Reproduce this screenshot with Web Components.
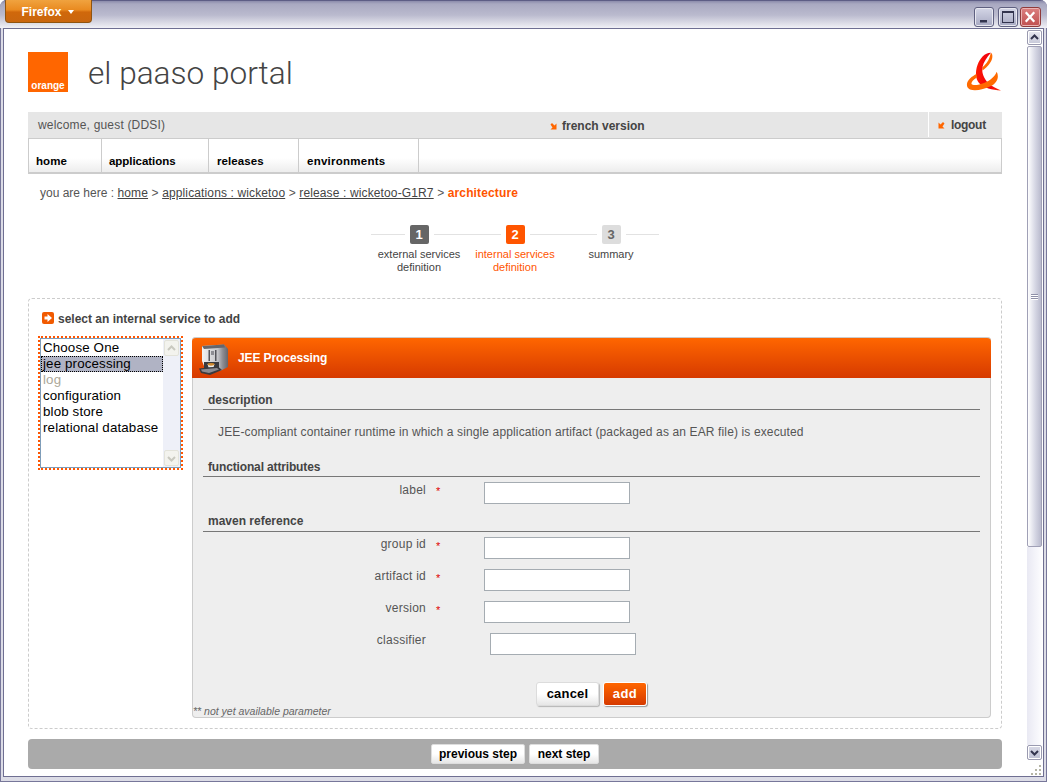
<!DOCTYPE html>
<html>
<head>
<meta charset="utf-8">
<title>el paaso portal</title>
<style>
  html, body { margin: 0; padding: 0; background: #fff; }
  body { font-family: "Liberation Sans", Arial, sans-serif; font-size: 12px; color: #444; overflow: hidden; }
</style>
</head>
<body>
<window-frame>
  <portal-header></portal-header>
  <user-bar></user-bar>
  <main-nav></main-nav>
  <bread-crumb></bread-crumb>
  <wizard-steps></wizard-steps>
  <service-box>
    <service-list slot="list">
      <service-option>Choose One</service-option>
      <service-option selected>jee processing</service-option>
      <service-option disabled>log</service-option>
      <service-option>configuration</service-option>
      <service-option>blob store</service-option>
      <service-option>relational database</service-option>
    </service-list>
    <service-form slot="form"></service-form>
  </service-box>
  <wizard-footer></wizard-footer>
</window-frame>

<script>
class WindowFrame extends HTMLElement {
  constructor() {
    super();
    this.attachShadow({ mode: "open" });
  }

  connectedCallback() {
    this.shadowRoot.innerHTML = `
      <style>
      :host {
        display: flex;
        flex-direction: column;
        width: 1047px;
        height: 782px;
        box-sizing: border-box;
        padding: 0 3px 5px 3px;
        background: #dcdce6;
        border-radius: 7px 7px 0 0;
        box-shadow: inset 0 -1px 0 #77779a, inset 1px 0 0 #77779a, inset -1px 0 0 #77779a;
        overflow: hidden;
      }
      .title {
        flex: none;
        height: 28px;
        margin: 0 -3px;
        padding: 0 6px 0 5px;
        display: flex;
        justify-content: space-between;
        align-items: flex-start;
        background: linear-gradient(#8b8bab 0, #a9a9c1 3px, #babace 14px, #e4e4ec 24px, #f6f6fa 28px);
        border-top: 1px solid #5d5d85;
        box-sizing: border-box;
      }
      .firefox {
        width: 87px;
        height: 23px;
        margin-top: -1px;
        box-sizing: border-box;
        display: flex;
        align-items: center;
        justify-content: center;
        gap: 6px;
        padding: 1px 2px 0 0;
        color: #fff;
        font: bold 12px "Liberation Sans", Arial, sans-serif;
        background: linear-gradient(#f0a33f, #e98a20 45%, #d0680b 55%, #c9660f);
        border: 1px solid #8f5410;
        border-top: 0;
        border-radius: 0 0 4px 4px;
      }
      .firefox i {
        border-left: 3.5px solid transparent;
        border-right: 3.5px solid transparent;
        border-top: 4px solid #fff;
      }
      .controls { display: flex; margin-top: 6px; }
      .btn {
        width: 20px;
        height: 20px;
        box-sizing: border-box;
        border: 1px solid #5f6080;
        border-radius: 3px;
        background: linear-gradient(#d4d6e6, #a7a9c2);
        box-shadow: inset 0 0 0 1px #e8e8f0;
      }
      .btn svg { display: block; width: 18px; height: 18px; }
      .btn.max { margin-left: 4px; }
      .btn.close {
        width: 21px;
        margin-left: 2px;
        border-color: #8f3b3b;
        background: linear-gradient(#dc8080, #c04f4f);
        box-shadow: inset 0 0 0 1px #eab2b2;
      }
      .inner {
        flex: 1;
        min-height: 0;
        display: flex;
        background: #fff;
        border: 1px solid #6f6f92;
      }
      .page {
        width: 1023px;
        flex: none;
        box-sizing: border-box;
        padding: 0 25px 0 24px;
        display: flex;
        flex-direction: column;
        overflow: hidden;
      }
      .bar {
        width: 16px;
        flex: none;
        display: flex;
        flex-direction: column;
        align-items: stretch;
      }
      .arrow {
        width: 15px;
        height: 15px;
        box-sizing: border-box;
        border: 1px solid #9a9ab0;
        border-radius: 2px;
        background: linear-gradient(#e9e9f1, #c6c8d8);
        box-shadow: inset 0 0 0 1px #fff;
        flex: none;
      }
      .arrow svg { display: block; }
      .up { margin-top: 1px; }
      .thumb {
        width: 15px;
        height: 501px;
        margin-top: 1px;
        box-sizing: border-box;
        border: 1px solid #a0a0b6;
        background: linear-gradient(90deg, #fff, #d6d7e4 55%, #b9bacd);
        border-radius: 2px;
        flex: none;
        display: flex;
        align-items: center;
        justify-content: center;
      }
      .grip { width: 7px; height: 6px; background: repeating-linear-gradient(#8f90a8 0 1px, #fff 1px 2px); }
      .track { flex: 1; width: 15px; background: linear-gradient(90deg, #e9e9f3, #fdfdff); }
      .resize { height: 16px; flex: none; position: relative; }
      .resize svg { display: block; margin: 5px 0 0 4px; }
      </style>
      <div class="title">
        <div class="firefox">Firefox<i></i></div>
        <div class="controls">
          <div class="btn"><svg viewBox="0 0 18 18"><rect x="5" y="12" width="7" height="2.5" fill="#33344e"/></svg></div>
          <div class="btn max"><svg viewBox="0 0 18 18"><rect x="3.5" y="3.5" width="11" height="11" fill="none" stroke="#33344e"/><rect x="3" y="3" width="12" height="2" fill="#33344e"/></svg></div>
          <div class="btn close"><svg viewBox="0 0 19 18"><path d="M5 4l9 10M14 4L5 14" stroke="#fff" stroke-width="2.4" fill="none"/></svg></div>
        </div>
      </div>
      <div class="inner">
        <div class="page"><slot></slot></div>
        <div class="bar">
          <div class="arrow up"><svg width="13" height="13" viewBox="0 0 13 13"><path d="M3 8l3.5-3.5L10 8" fill="none" stroke="#33344e" stroke-width="2"/></svg></div>
          <div class="thumb"><div class="grip"></div></div>
          <div class="track"></div>
          <div class="arrow" style="background:linear-gradient(#d8d9e6,#bfc1d4)"><svg width="13" height="13" viewBox="0 0 13 13"><path d="M3 5l3.5 3.5L10 5" fill="none" stroke="#33344e" stroke-width="2"/></svg></div>
          <div class="resize"><svg width="11" height="11" viewBox="0 0 11 11" fill="#b5b5a5"><rect x="8" y="0" width="2" height="2"/><rect x="4" y="4" width="2" height="2"/><rect x="8" y="4" width="2" height="2"/><rect x="0" y="8" width="2" height="2"/><rect x="4" y="8" width="2" height="2"/><rect x="8" y="8" width="2" height="2"/></svg></div>
        </div>
      </div>
    `;
  }
}

class PortalHeader extends HTMLElement {
  constructor() {
    super();
    this.attachShadow({ mode: "open" });
  }

  connectedCallback() {
    this.shadowRoot.innerHTML = `
      <style>
      :host {
        display: flex;
        align-items: center;
        height: 40px;
        padding: 23px 0 20px 0;
      }
      .logo {
        width: 40px;
        height: 40px;
        background: #ff6600;
        display: flex;
        align-items: flex-end;
        justify-content: center;
        color: #fff;
        font: bold 10px/13px "Liberation Sans", Arial, sans-serif;
      }
      h1 {
        margin: 3px 0 0 20px;
        flex: 1;
        font: 300 31.600px/40px Roboto, "Liberation Sans", sans-serif;
        color: #444;
      }
      svg { display: block; }
      </style>
      <div class="logo">orange</div>
      <h1>el paaso portal</h1>
      <svg width="36" height="40" viewBox="0 0 36 40">
        <defs>
          <linearGradient id="red" x1="0" y1="0" x2="1" y2="0">
            <stop offset="0" stop-color="#ff1a00"/>
            <stop offset=".5" stop-color="#f0000f"/>
            <stop offset="1" stop-color="#ff2a00"/>
          </linearGradient>
        </defs>
        <path fill="#ff6a00" d="M25 .7C27 2 27 7 24 11C22 14 19 16.500 16.500 18.500L16.200 15.500C19 13 22.500 9 23.500 5.500C24 3.500 24.500 2 25 .7Z"/>
        <path fill="url(#red)" d="M25 .7C19 .5 14 6 11.500 13C9 20 9.500 27 13 31C18 36 26 38 35 38.500C30 36 25 34 22 31C17.500 26 15.500 20 16.500 15C17.500 10 21 5 25 .7Z"/>
        <path fill="#ff6a00" d="M30.700 19.700C33.500 25 31 31 25 34C18 37.500 9 39.500 4 37.500C-.5 35 .3 30 4 26.500C6 24.500 8.500 23 10.500 22L10.800 25.500C7.500 27.500 5 30 5.500 32C7 34 13 33 18 31C24 28.500 29 24.500 30.700 19.700Z"/>
      </svg>
    `;
  }
}

class UserBar extends HTMLElement {
  constructor() {
    super();
    this.attachShadow({ mode: "open" });
  }

  connectedCallback() {
    this.shadowRoot.innerHTML = `
      <style>
      :host {
        display: flex;
        align-items: stretch;
        height: 26px;
        background: #e6e6e6;
        color: #555;
        font: 12px/25px "Liberation Sans", Arial, sans-serif;
      }
      .welcome { width: 510px; padding-left: 10px; box-sizing: border-box; line-height: 27px; letter-spacing: .18px; }
      .lang {
        width: 390px;
        font-weight: bold;
        color: #444;
        display: flex;
        align-items: center;
        gap: 5px;
        padding: 3px 0 0 12px;
        box-sizing: border-box;
      }
      .logout {
        flex: 1;
        border-left: 1px solid #fff;
        font-weight: bold;
        color: #444;
        display: flex;
        align-items: center;
        gap: 6px;
        padding: 1px 0 0 9px;
        height: 24px;
        letter-spacing: -.3px;
      }
      svg { display: block; flex: none; }
      </style>
      <div class="welcome">welcome, guest (DDSI)</div>
      <div class="lang">
        <svg width="7" height="7" viewBox="0 0 7 7"><path d="M.5 1.500L2 0 4.500 2.500 6.500 .5V6.500H.5L2.500 4.500Z" fill="#ff6600"/></svg>
        french version
      </div>
      <div class="logout">
        <svg width="7" height="7" viewBox="0 0 7 7"><path d="M6.500 1.500L5 0 2.500 2.500 .5 .5V6.500H6.500L4.500 4.500Z" fill="#ff6600"/></svg>
        logout
      </div>
    `;
  }
}

class MainNav extends HTMLElement {
  constructor() {
    super();
    this.attachShadow({ mode: "open" });
  }

  connectedCallback() {
    this.shadowRoot.innerHTML = `
      <style>
      :host {
        display: flex;
        height: 36px;
        box-sizing: border-box;
        border: 1px solid #ccc;
        border-bottom-width: 2px;
        background: linear-gradient(#fff 19px, #ededed);
        color: #000;
        font: bold 11.500px/14px "Liberation Sans", Arial, sans-serif;
        letter-spacing: .1px;
      }
      a {
        box-sizing: border-box;
        padding: 15px 0 0 8px;
        border-right: 1px solid #ccc;
        color: inherit;
        text-decoration: none;
      }
      </style>
      <a style="width:73px;padding-left:7px">home</a>
      <a style="width:107px;padding-left:7px;letter-spacing:-.05px">applications</a>
      <a style="width:90px">releases</a>
      <a style="width:120px;letter-spacing:.25px">environments</a>
    `;
  }
}

class BreadCrumb extends HTMLElement {
  constructor() {
    super();
    this.attachShadow({ mode: "open" });
  }

  connectedCallback() {
    this.shadowRoot.innerHTML = `
      <style>
      :host {
        display: block;
        height: 51px;
        box-sizing: border-box;
        padding: 12px 0 0 12px;
        color: #555;
        font: 12px/15px "Liberation Sans", Arial, sans-serif;
        letter-spacing: .13px;
      }
      span { letter-spacing: 0; }
      a { color: #444; text-decoration: underline; }
      b { color: #ff5500; }
      </style>
      <span>you are here :</span> <a>home</a> &gt; <a>applications : wicketoo</a> &gt; <a>release : wicketoo-G1R7</a> &gt; <b>architecture</b>
    `;
  }
}

class WizardSteps extends HTMLElement {
  constructor() {
    super();
    this.attachShadow({ mode: "open" });
  }

  connectedCallback() {
    this.shadowRoot.innerHTML = `
      <style>
      :host {
        display: flex;
        justify-content: center;
        height: 73px;
        font: 11px/13px "Liberation Sans", Arial, sans-serif;
        color: #444;
      }
      .step { width: 96px; display: flex; flex-direction: column; align-items: center; }
      .head { align-self: stretch; display: flex; align-items: center; gap: 5px; height: 19px; margin-bottom: 4px; }
      .line { flex: 1; height: 1px; background: #e2e2e2; }
      .num {
        width: 19px;
        height: 19px;
        border-radius: 2px;
        background: #666;
        color: #fff;
        font: bold 13px/19px "Liberation Sans", Arial, sans-serif;
        text-align: center;
      }
      .label { text-align: center; white-space: nowrap; }
      .on .num { background: #ff5500; }
      .on .label { color: #ff5500; }
      .off .num { background: #ddd; color: #666; }
      </style>
      <div class="step">
        <div class="head"><span class="line"></span><span class="num">1</span><span class="line"></span></div>
        <div class="label">external services<br>definition</div>
      </div>
      <div class="step on">
        <div class="head"><span class="line"></span><span class="num">2</span><span class="line"></span></div>
        <div class="label">internal services<br>definition</div>
      </div>
      <div class="step off">
        <div class="head"><span class="line"></span><span class="num">3</span><span class="line"></span></div>
        <div class="label">summary</div>
      </div>
    `;
  }
}

class ServiceBox extends HTMLElement {
  constructor() {
    super();
    this.attachShadow({ mode: "open" });
  }

  connectedCallback() {
    this.shadowRoot.innerHTML = `
      <style>
      :host {
        display: block;
        box-sizing: border-box;
        border: 1px dashed #ccc;
        border-radius: 4px;
        padding: 13px 10px 10px 9px;
      }
      .heading {
        display: flex;
        align-items: center;
        gap: 4px;
        height: 12px;
        margin: 0 0 12px 4px;
        color: #444;
        font: bold 12px/12px "Liberation Sans", Arial, sans-serif;
      }
      .heading span { margin-top: 2px; }
      .heading svg { display: block; flex: none; }
      .row { display: flex; align-items: flex-start; gap: 9px; }
      </style>
      <div class="heading">
        <svg width="12" height="12" viewBox="0 0 12 12"><rect width="12" height="12" rx="2" fill="#f15a00"/><path d="M2.500 4.500h3V2l4.500 4-4.500 4V7.500h-3z" fill="#fff"/></svg>
        <span>select an internal service to add</span>
      </div>
      <div class="row">
        <slot name="list"></slot>
        <slot name="form"></slot>
      </div>
    `;
  }
}

class ServiceList extends HTMLElement {
  constructor() {
    super();
    this.attachShadow({ mode: "open" });
  }

  connectedCallback() {
    this.shadowRoot.innerHTML = `
      <style>
      :host {
        display: flex;
        flex: none;
        width: 145px;
        height: 134px;
        box-sizing: border-box;
        border: 2px dotted #ff5500;
        font: 13.330px/16px "Liberation Sans", Arial, sans-serif;
        letter-spacing: .14px;
        color: #000;
      }
      .inner {
        flex: 1;
        display: flex;
        border: 1px solid #7f9db9;
        background: #fff;
        min-width: 0;
      }
      .items { flex: 1; padding: 1px 0 0 0; min-width: 0; }
      .scroll {
        width: 17px;
        flex: none;
        background: #eef0f8;
        display: flex;
        flex-direction: column;
        justify-content: space-between;
        padding: 1px 0;
        box-sizing: border-box;
      }
      .arrow {
        width: 15px;
        height: 16px;
        margin-left: 1px;
        box-sizing: border-box;
        border: 1px solid #e3e3da;
        border-radius: 2px;
        background: #f3f3ee;
      }
      .arrow svg { display: block; }
      </style>
      <div class="inner">
        <div class="items"><slot></slot></div>
        <div class="scroll">
          <div class="arrow"><svg width="13" height="14" viewBox="0 0 13 14"><path d="M3 9l3.500-3.500L10 9" fill="none" stroke="#c9c9c0" stroke-width="2"/></svg></div>
          <div class="arrow"><svg width="13" height="14" viewBox="0 0 13 14"><path d="M3 6l3.500 3.500L10 6" fill="none" stroke="#c9c9c0" stroke-width="2"/></svg></div>
        </div>
      </div>
    `;
  }
}

class ServiceOption extends HTMLElement {
  constructor() {
    super();
    this.attachShadow({ mode: "open" });
  }

  connectedCallback() {
    this.shadowRoot.innerHTML = `
      <style>
      :host { display: block; height: 16px; padding-left: 2px; white-space: nowrap; }
      :host([selected]) { background: #b0b3c4; outline: 1px dotted #000; outline-offset: -1px; }
      :host([disabled]) { color: #aca899; }
      </style>
      <slot></slot>
    `;
  }
}

class FormRow extends HTMLElement {
  constructor() {
    super();
    this.attachShadow({ mode: "open" });
  }

  connectedCallback() {
    const required = this.hasAttribute("required");
    this.shadowRoot.innerHTML = `
      <style>
      :host {
        display: flex;
        align-items: flex-start;
        height: 22px;
        margin: 0 10px;
        font: 12px/16px "Liberation Sans", Arial, sans-serif;
        color: #555;
      }
      .label { width: 223px; text-align: right; white-space: nowrap; letter-spacing: .25px; line-height: var(--label-height, 16px); }
      .star { width: ${required ? 58 : 64}px; padding-left: 10px; box-sizing: border-box; color: #e00000; font-size: 11px; line-height: 18px; }
      input {
        display: block;
        width: 146px;
        height: 22px;
        box-sizing: border-box;
        margin: 0;
        padding: 0 3px;
        background: #fff;
        border: 1px solid #a5acb2;
        font: 12px "Liberation Sans", Arial, sans-serif;
      }
      </style>
      <div class="label">${this.getAttribute("label")}</div>
      <div class="star">${required ? "*" : ""}</div>
      <input type="text">
    `;
  }
}

class ActionButton extends HTMLElement {
  constructor() {
    super();
    this.attachShadow({ mode: "open" });
  }

  connectedCallback() {
    this.shadowRoot.innerHTML = `
      <style>
      :host {
        display: block;
        box-sizing: border-box;
        height: 24px;
        border: 1px solid #dcdcdc;
        border-radius: 3px;
        background: linear-gradient(#fff 50%, #e6e6e6);
        box-shadow: 1px 1px 1px #b5b5b5;
        color: #000;
        font: bold 13px/21px "Liberation Sans", Arial, sans-serif;
        letter-spacing: .2px;
        text-align: center;
        white-space: nowrap;
      }
      :host([primary]) {
        border-color: #fff;
        background: linear-gradient(#ff6600, #d63a00);
        color: #fff;
        letter-spacing: .4px;
        box-shadow: 1px 1px 1px #999;
      }
      :host([small]) {
        height: 20px;
        border: 1px solid #ddd;
        border-radius: 2px;
        box-shadow: none;
        font-size: 12px;
        line-height: 18px;
        letter-spacing: 0;
      }
      </style>
      <slot></slot>
    `;
  }
}

class ServiceForm extends HTMLElement {
  constructor() {
    super();
    this.attachShadow({ mode: "open" });
  }

  connectedCallback() {
    this.shadowRoot.innerHTML = `
      <style>
      :host {
        display: block;
        flex: none;
        width: 799px;
        margin-top: 1px;
        box-sizing: border-box;
        background: #eee;
        border: 1px solid #ccc;
        border-top: 0;
        border-radius: 4px;
        font: 12px "Liberation Sans", Arial, sans-serif;
      }
      .top {
        height: 41px;
        margin: 0 -1px;
        display: flex;
        align-items: center;
        gap: 8px;
        padding-left: 6px;
        background: linear-gradient(#ff6600, #d63a00);
        border-top: 1px solid #ccc;
        box-sizing: border-box;
        border-radius: 4px 4px 0 0;
        color: #fff;
        font: bold 12px/14px "Liberation Sans", Arial, sans-serif;
        letter-spacing: -.1px;
      }
      .top svg { display: block; flex: none; }
      .head {
        margin: 0 10px;
        padding: 0 0 2px 5px;
        border-bottom: 1px solid #777;
        color: #444;
        font: bold 12px/14px "Liberation Sans", Arial, sans-serif;
      }
      .desc { margin: 14px 0 0 25px; font: 12px/16px "Liberation Sans", Arial, sans-serif; letter-spacing: .13px; color: #555; white-space: nowrap; }
      .rows { display: flex; flex-direction: column; gap: 10px; margin-top: 5px; }
      .buttons { display: flex; justify-content: center; gap: 4px; margin-top: 27px; }
      .note { font: italic 10.500px/11px "Liberation Sans", Arial, sans-serif; color: #666; height: 11px; }
      </style>
      <div class="top">
        <svg width="32" height="35" viewBox="0 0 32 35">
          <defs>
            <linearGradient id="steel" x1="0" x2="1" y1="0" y2="0">
              <stop offset="0" stop-color="#f2f2f2"/>
              <stop offset=".6" stop-color="#c4c4c8"/>
              <stop offset=".8" stop-color="#8c8c92"/>
              <stop offset="1" stop-color="#66666c"/>
            </linearGradient>
          </defs>
          <path d="M4 5L26 3.500 30 8V26L22 30H8L4 20Z" fill="url(#steel)"/>
          <path d="M4 5L26 3.500 27 6.500 6 8Z" fill="#66666c"/>
          <rect x="10.500" y="9" width="1.500" height="11" fill="#55555a"/>
          <rect x="17" y="9" width="1.500" height="11" fill="#55555a"/>
          <rect x="13" y="10" width="3" height="4" fill="#8c8c92"/>
          <path d="M6 21H21V27H6Z" fill="#3a3a3e"/>
          <path d="M9.500 23H16.500L15.500 26.500H10.500Z" fill="#eee"/>
          <ellipse cx="13" cy="23.300" rx="3.500" ry="1.400" fill="#d08a30"/>
          <path d="M1 27.500L20 25.500 24 29 12 34 3 32Z" fill="#3a3a3e"/>
          <path d="M3 28.500L19 27 21 28.500 11 32 4 30.500Z" fill="#8c8c92"/>
        </svg>
        <span>JEE Processing</span>
      </div>
      <div class="head" style="margin-top:15px">description</div>
      <p class="desc">JEE-compliant container runtime in which a single application artifact (packaged as an EAR file) is executed</p>
      <div class="head" style="margin-top:20px;letter-spacing:-.15px">functional attributes</div>
      <div class="rows"><form-row label="label" required></form-row></div>
      <div class="head" style="margin-top:10px;padding-bottom:3px">maven reference</div>
      <div class="rows" style="--label-height:14px">
        <form-row label="group id" required></form-row>
        <form-row label="artifact id" required></form-row>
        <form-row label="version" required></form-row>
        <form-row label="classifier"></form-row>
      </div>
      <div class="buttons">
        <action-button style="width:63px">cancel</action-button>
        <action-button style="width:44px" primary>add</action-button>
      </div>
      <div class="note">** not yet available parameter</div>
    `;
  }
}

class WizardFooter extends HTMLElement {
  constructor() {
    super();
    this.attachShadow({ mode: "open" });
  }

  connectedCallback() {
    this.shadowRoot.innerHTML = `
      <style>
      :host {
        display: flex;
        justify-content: center;
        align-items: center;
        gap: 4px;
        height: 30px;
        margin-top: 10px;
        background: #aaa;
        border-radius: 4px;
        flex: none;
      }
      </style>
      <action-button small style="width:94px">previous step</action-button>
      <action-button small style="width:70px">next step</action-button>
    `;
  }
}

customElements.define("window-frame", WindowFrame);
customElements.define("portal-header", PortalHeader);
customElements.define("user-bar", UserBar);
customElements.define("main-nav", MainNav);
customElements.define("bread-crumb", BreadCrumb);
customElements.define("wizard-steps", WizardSteps);
customElements.define("service-box", ServiceBox);
customElements.define("service-list", ServiceList);
customElements.define("service-option", ServiceOption);
customElements.define("form-row", FormRow);
customElements.define("action-button", ActionButton);
customElements.define("service-form", ServiceForm);
customElements.define("wizard-footer", WizardFooter);
</script>
</body>
</html>
